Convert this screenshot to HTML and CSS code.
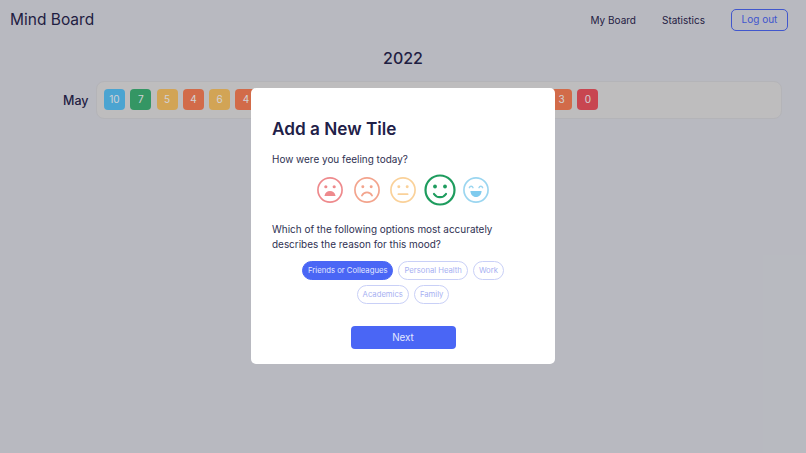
FILE: index.html
```html
<!DOCTYPE html>
<html lang="en">
<head>
  <meta charset="UTF-8">
  <title>Mind Board</title>
  <link rel="stylesheet" href="styles.css">
</head>
<body>
  <header class="topbar">
    <div class="brand">Mind Board</div>
    <nav class="nav">
      <a class="nav-link">My Board</a>
      <a class="nav-link">Statistics</a>
      <a class="logout">Log out</a>
    </nav>
  </header>

  <h1 class="year">2022</h1>

  <div class="month">
    <div class="month-name">May</div>
    <div class="tiles">
      <span class="tile blue">10</span>
      <span class="tile green">7</span>
      <span class="tile yellow">5</span>
      <span class="tile orange">4</span>
      <span class="tile yellow">6</span>
      <span class="tile orange">4</span>
      <span class="tile yellow">5</span>
      <span class="tile orange">4</span>
      <span class="tile yellow">5</span>
      <span class="tile green">7</span>
      <span class="tile yellow">6</span>
      <span class="tile orange">4</span>
      <span class="tile yellow">5</span>
      <span class="tile orange">4</span>
      <span class="tile yellow">6</span>
      <span class="tile orange">3</span>
      <span class="tile yellow">5</span>
      <span class="tile orange">3</span>
      <span class="tile red">0</span>
    </div>
  </div>

  <div class="overlay">
    <div class="modal">
      <h2 class="modal-title">Add a New Tile</h2>
      <p class="question">How were you feeling today?</p>
      <div class="moods">
        <svg class="mood" viewBox="0 0 28 28" fill="none" stroke="#ee8a8d" stroke-width="1.8">
          <circle cx="14" cy="14" r="13"/>
          <circle cx="9.500" cy="10.500" r="1.700" fill="#ee8a8d" stroke="none"/>
          <circle cx="18.500" cy="10.500" r="1.700" fill="#ee8a8d" stroke="none"/>
          <path d="M8 20.500c.6-3.800 3-5.500 6-5.500s5.400 1.700 6 5.500z" fill="#ee8a8d" stroke="none"/>
        </svg>
        <svg class="mood" viewBox="0 0 28 28" fill="none" stroke="#f3a48d" stroke-width="1.8">
          <circle cx="14" cy="14" r="13"/>
          <circle cx="9.500" cy="10.500" r="1.600" fill="#f3a48d" stroke="none"/>
          <circle cx="18.500" cy="10.500" r="1.600" fill="#f3a48d" stroke="none"/>
          <path d="M8.500 20c1.200-2.400 3-3.500 5.500-3.500s4.300 1.100 5.500 3.500" stroke-linecap="round"/>
        </svg>
        <svg class="mood" viewBox="0 0 28 28" fill="none" stroke="#fad199" stroke-width="1.8">
          <circle cx="14" cy="14" r="13"/>
          <circle cx="9.500" cy="10.500" r="1.600" fill="#fad199" stroke="none"/>
          <circle cx="18.500" cy="10.500" r="1.600" fill="#fad199" stroke="none"/>
          <path d="M9 18.500h10" stroke-linecap="round"/>
        </svg>
        <svg class="mood mood-big" viewBox="0 0 32 32" fill="none" stroke="#1e9c5e" stroke-width="2.200">
          <circle cx="16" cy="16" r="14.500"/>
          <circle cx="11" cy="12.500" r="1.900" fill="#1e9c5e" stroke="none"/>
          <circle cx="21" cy="12.500" r="1.900" fill="#1e9c5e" stroke="none"/>
          <path d="M10 20c1.400 2.200 3.500 3.200 6 3.200s4.600-1 6-3.200" stroke-linecap="round"/>
        </svg>
        <svg class="mood" viewBox="0 0 28 28" fill="none" stroke="#9bd6f0" stroke-width="1.800">
          <circle cx="14" cy="14" r="13"/>
          <path d="M6.800 11.500c.7-2 3.300-2 4 0M17.200 11.500c.7-2 3.300-2 4 0" stroke-width="1.500" stroke-linecap="round"/>
          <path d="M8 15h12c0 3.600-2.600 6.500-6 6.500s-6-2.900-6-6.500z" fill="#7fcbee" stroke="none"/>
        </svg>
      </div>
      <p class="question">Which of the following options most accurately describes the reason for this mood?</p>
      <div class="chips">
        <span class="chip active">Friends or Colleagues</span>
        <span class="chip">Personal Health</span>
        <span class="chip">Work</span>
        <span class="chip">Academics</span>
        <span class="chip">Family</span>
      </div>
      <button class="next">Next</button>
    </div>
  </div>
</body>
</html>
```

FILE: styles.css
```css
* {
  box-sizing: border-box;
}

body {
  margin: 0;
  height: 453px;
  overflow: hidden;
  background-color: #dfe0e5;
  color: #1f2148;
  font-family: 'Inter', 'Open Sans', sans-serif;
}

.topbar {
  display: flex;
  justify-content: space-between;
  align-items: center;
  padding: 8.500px 18px 0 10px;
}

.brand {
  font-size: 15.500px;
}

.nav {
  display: flex;
  align-items: center;
  gap: 26px;
  font-size: 10px;
}

.logout {
  width: 57px;
  height: 22px;
  line-height: 19px;
  text-align: center;
  border: 1.500px solid #4a66f5;
  border-radius: 5px;
  color: #4a66f5;
}

.year {
  margin: 17.500px 0 13px;
  text-align: center;
  font-size: 16px;
  font-weight: 500;
  line-height: 20px;
}

.month {
  display: flex;
  align-items: center;
  gap: 8px;
  padding: 0 24px 0 63px;
}

.month-name {
  width: 25px;
  font-size: 12.500px;
  font-weight: 500;
}

.tiles {
  flex: 1;
  display: flex;
  gap: 5.300px;
  height: 38px;
  padding: 7px;
  background-color: #e6e5e3;
  border: 1.500px solid #dadadb;
  border-radius: 8px;
}

.tile {
  width: 21px;
  height: 21px;
  border-radius: 4px;
  color: #fff;
  font-size: 10px;
  line-height: 21px;
  text-align: center;
}

.blue { background-color: #57c6fb; }
.green { background-color: #3ab472; }
.yellow { background-color: #ffc65f; }
.orange { background-color: #ff7f50; }
.red { background-color: #f35059; }

.overlay {
  position: absolute;
  top: 0;
  left: 0;
  width: 100%;
  height: 100%;
  background-color: rgba(28, 32, 44, 0.2);
}

.modal {
  width: 304px;
  height: 276px;
  margin: 88px auto 0;
  padding: 29.500px 21px 0;
  background-color: #fff;
  border-radius: 5px;
}

.modal-title {
  margin: 0 0 12px;
  font-size: 17.200px;
  font-weight: 600;
  line-height: 22px;
  color: #1f2148;
}

.question {
  margin: 0;
  font-size: 9.950px;
  line-height: 14.500px;
  color: #2f3152;
}

.moods {
  display: flex;
  justify-content: center;
  align-items: center;
  margin: 8px 0 16px;
}

.mood {
  width: 26px;
  height: 26px;
  margin: 0 5.250px;
}

.mood-big {
  width: 32px;
  height: 32px;
  margin: 0 2.250px;
}

.chips {
  display: flex;
  flex-wrap: wrap;
  justify-content: center;
  gap: 5px;
  margin: 10px 20px 0;
}

.chip {
  height: 19px;
  padding: 0 5px;
  line-height: 17px;
  border: 1px solid #c9d0f7;
  border-radius: 10px;
  font-size: 7.700px;
  color: #a7b1f2;
}

.active {
  background-color: #4a66f5;
  border-color: #4a66f5;
  color: #e3e8ff;
}

.next {
  display: block;
  width: 105px;
  height: 23px;
  margin: 22px auto 0;
  background-color: #4a66f5;
  border: 0;
  border-radius: 4px;
  color: #e3e8ff;
  font-family: inherit;
  font-size: 9.800px;
}
```
